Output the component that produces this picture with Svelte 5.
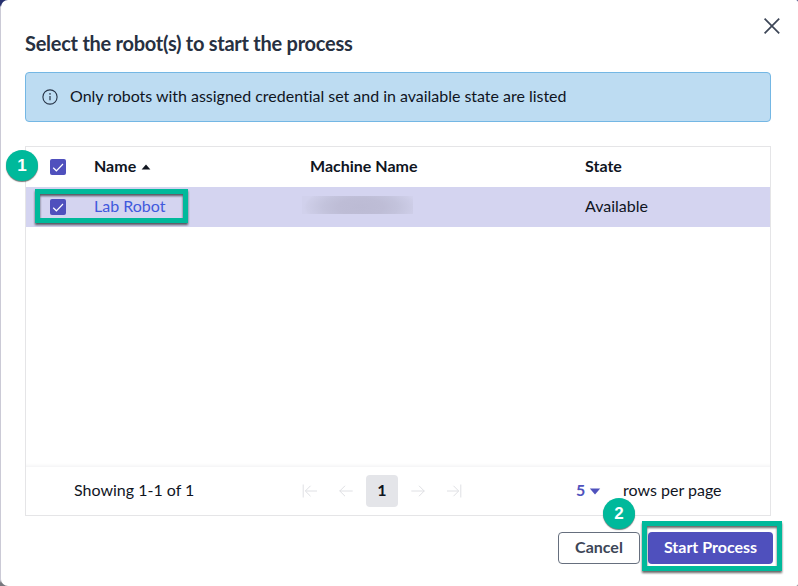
<script>
  const columns = ['Name', 'Machine Name', 'State'];
</script>

{#snippet check()}
  <span class="check">
    <svg width="16" height="16" viewBox="0 0 16 16"><path d="M3.2 8.7 6.4 11.8 13 5" fill="none" stroke="#fff" stroke-width="1.2" /></svg>
  </span>
{/snippet}

<div class="backdrop">
  <section class="dialog">
    <header>
      <h1>Select the robot(s) to start the process</h1>
      <button class="close" aria-label="Close">
        <svg width="18" height="18" viewBox="0 0 18 18"><path d="M1.6 1.6 16.2 16.4M16.2 1.6 1.6 16.4" stroke="#3d4657" stroke-width="1.7" /></svg>
      </button>
    </header>

    <div class="notice">
      <svg width="16" height="16" viewBox="0 0 16 16">
        <circle cx="8" cy="8" r="7.1" fill="none" stroke="#273447" stroke-width="1.1" />
        <path d="M8 7v4.2" stroke="#273447" stroke-width="1.2" /><circle cx="8" cy="4.9" r=".8" fill="#273447" />
      </svg>
      <span class="notice-text">Only robots with assigned credential set and in available state are listed</span>
    </div>

    <div class="table">
      <div class="row head">
        {@render check()}
        <div class="name">{columns[0]}<svg width="10" height="6" viewBox="0 0 10 6"><path d="M.6 5.4 5 .4 9.4 5.4Z" fill="#10151f" /></svg></div>
        <div class="machine">{columns[1]}</div>
        <div class="state">{columns[2]}</div>
        <span class="badge one">1</span>
      </div>
      <div class="row selected">
        {@render check()}
        <a class="name" href="#robot">Lab Robot</a>
        <div class="machine"><span class="redacted"></span></div>
        <div class="state">Available</div>
        <span class="mark mark-row"></span>
      </div>
      <div class="empty"></div>
      <footer>
        <span class="showing">Showing 1-1 of 1</span>
        <nav>
          <svg width="16" height="16" viewBox="0 0 16 16"><path d="M1.2 1.5v13M15 8H3.5M8.5 2.8 3.3 8l5.2 5.2" /></svg>
          <svg width="16" height="16" viewBox="0 0 16 16"><path d="M14.7 8H1.5M7 2.8 1.8 8 7 13.2" /></svg>
          <strong>1</strong>
          <svg width="16" height="16" viewBox="0 0 16 16"><path d="M1.3 8h13.2M9 2.8 14.2 8 9 13.2" /></svg>
          <svg width="16" height="16" viewBox="0 0 16 16"><path d="M14.8 1.5v13M1 8h11.5M7.5 2.8 12.7 8l-5.2 5.2" /></svg>
        </nav>
        <span class="size">5<svg width="12" height="7" viewBox="0 0 12 7"><path d="M.8.5h10.4L6 6.6Z" fill="#4f52bd" /></svg></span>
        <span class="per">rows per page</span>
      </footer>
    </div>

    <div class="actions">
      <button class="cancel"><span>Cancel</span></button>
      <button class="start"><span>Start Process</span></button>
      <span class="mark mark-start"></span>
      <span class="badge two">2</span>
    </div>
  </section>
</div>

<style>
  :global(body) { margin: 0; overflow: hidden; }
  * { box-sizing: border-box; }
  .backdrop {
    width: 798px; height: 586px; padding-left: 1px;
    background: linear-gradient(#26306e 0 5px, #cbcad6 7px 580px, #77777d 583px);
    font: 16px/20px Lato, "Liberation Sans", sans-serif; color: #10151f;
    font-variant-ligatures: none;
  }
  .dialog {
    width: 797px; height: 586px; padding: 0 27px 0 24px;
    display: flex; flex-direction: column;
    background: #fff; border-radius: 7px 2px 2px 7px;
  }
  header { height: 72px; flex: none; display: flex; justify-content: space-between; margin-right: -10px; }
  h1 { margin: 31px 0 0; font: 700 20px/24px Lato, sans-serif; letter-spacing: -.26px; color: #273041; white-space: nowrap; }
  button { font: inherit; padding: 0; }
  .close { width: 18px; height: 18px; margin-top: 17px; border: 0; background: none; }
  svg { display: block; flex: none; }
  .notice {
    height: 50px; flex: none; display: flex; align-items: center; gap: 12px; padding-left: 16px;
    background: #bddcf2; border: 1px solid #74b7e4; border-radius: 4px;
  }
  .notice-text { letter-spacing: -.02px; padding-bottom: 2px; }
  .table { height: 370px; flex: none; margin-top: 24px; border: 1px solid #e5e5e7; }
  .row { position: relative; display: grid; grid-template-columns: 44px 216px 275px 1fr; align-items: center; height: 40px; padding-left: 24px; }
  .row > div, .row > a { padding-bottom: 2px; }
  .head { font-weight: 700; }
  .name { display: flex; align-items: center; gap: 5px; }
  .name svg { margin-top: 2px; }
  a { color: #4159dd; text-decoration: none; }
  .selected { background: #d4d4f0; }
  .check { width: 16px; height: 16px; border-radius: 2px; background: #4f50bd; }
  .redacted {
    display: block; width: 111px; height: 18px; margin: -2px 0 0 -8px;
    background: radial-gradient(ellipse 57px 22px at 53% 62%, #bcbbd4 0, #bebdd6 40%, #c3c3dc 65%, #cecee8 95%, #d1d1ec 100%);
  }
  .empty { height: 240px; box-shadow: inset 0 -3px 3px -2px #f6f6f7; border-bottom: 1px solid #f6f6f7; }
  footer { height: 48px; display: flex; align-items: center; padding-left: 48px; }
  .showing { width: 228px; padding-bottom: 2px; }
  nav { width: 274px; display: flex; align-items: center; gap: 20px; }
  nav svg { fill: none; stroke: #dfe0e4; stroke-width: 1; }
  nav strong { width: 32px; height: 32px; margin: 0 -8px; border-radius: 4px; background: #e4e5e9; text-align: center; line-height: 30px; }
  .size { width: 47px; display: flex; align-items: center; gap: 4px; padding-bottom: 2px; color: #4f52bd; font-weight: 700; }
  .size svg { margin-top: 2px; }
  .per { padding-bottom: 2px; }
  .actions { position: relative; display: flex; justify-content: flex-end; gap: 8px; padding-top: 16px; margin-right: -2px; }
  .actions button { height: 32px; padding-bottom: 2px; border-radius: 4px; font-weight: 700; white-space: nowrap; }
  .cancel { width: 82px; background: #fff; border: 1px solid #666f7e; color: #3d4657; }
  .start { width: 125px; background: #4f50bd; border: 0; color: #fff; }
  .badge {
    position: absolute; width: 32px; height: 31px; border-radius: 50%;
    background: #00b99b; color: #fff; box-shadow: 0 1px 1px #0008;
    font: 700 17px/31px "Liberation Sans", Arial, sans-serif; text-align: center;
  }
  .one { left: -20px; top: 3px; }
  .two { left: 578px; top: -18px; }
  .mark { position: absolute; border: 5px solid #00b99b; filter: drop-shadow(0 2px 1px #0009); }
  .mark-row { left: 9px; top: 2px; width: 153px; height: 34px; }
  .mark-start { left: 617px; top: 5px; width: 140px; height: 50px; }
</style>
